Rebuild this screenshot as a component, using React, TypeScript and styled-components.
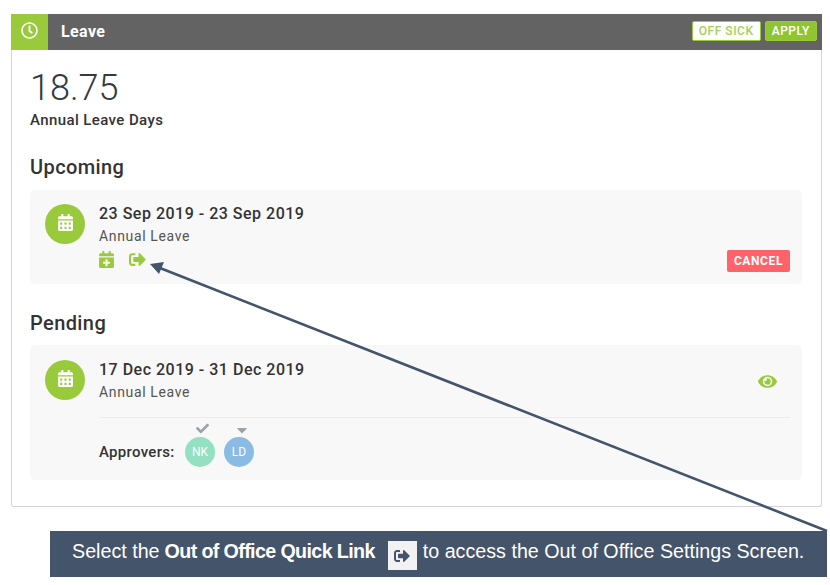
import React from 'react';
import styled, { createGlobalStyle } from 'styled-components';
import { FaCalendarAlt, FaCalendarPlus, FaCaretDown, FaCheck, FaEye, FaRegClock, FaSignOutAlt } from 'react-icons/fa';

const GlobalStyle = createGlobalStyle`
    html, body {
        margin: 0;
        padding: 0;
        background: #fff;
    }
    body {
        font-family: Roboto, "Liberation Sans", sans-serif;
        color: #333;
    }
`;

const App: React.FC = () => {
    return (
        <SPage>
            <GlobalStyle />
            <SCard>
                <SHeader>
                    <SHeaderIcon>
                        <FaRegClock />
                    </SHeaderIcon>
                    <STitle>Leave</STitle>
                    <SHeaderActions>
                        <SOutlineButton>OFF SICK</SOutlineButton>
                        <SSolidButton>APPLY</SSolidButton>
                    </SHeaderActions>
                </SHeader>
                <SBody>
                    <SBalance>18.75</SBalance>
                    <SBalanceLabel>Annual Leave Days</SBalanceLabel>
                    <SSectionTitle>Upcoming</SSectionTitle>
                    <SPanel>
                        <SRow>
                            <SAvatar>
                                <FaCalendarAlt />
                            </SAvatar>
                            <SDetails>
                                <SDates>23 Sep 2019 - 23 Sep 2019</SDates>
                                <SLeaveType>Annual Leave</SLeaveType>
                                <SQuickLinks>
                                    <FaCalendarPlus />
                                    <FaSignOutAlt />
                                </SQuickLinks>
                            </SDetails>
                            <SCancelButton>CANCEL</SCancelButton>
                        </SRow>
                    </SPanel>
                    <SPendingTitle>Pending</SPendingTitle>
                    <SPendingPanel>
                        <SRow>
                            <SAvatar>
                                <FaCalendarAlt />
                            </SAvatar>
                            <SDetails>
                                <SDates>17 Dec 2019 - 31 Dec 2019</SDates>
                                <SLeaveType>Annual Leave</SLeaveType>
                            </SDetails>
                            <SEye>
                                <FaEye />
                            </SEye>
                        </SRow>
                        <SApprovers>
                            <SApproversLabel>Approvers:</SApproversLabel>
                            <SApprover>
                                <SApproverStatus $size={13}>
                                    <FaCheck />
                                </SApproverStatus>
                                <SInitials $color='#8ee0c0'>NK</SInitials>
                            </SApprover>
                            <SApprover>
                                <SApproverStatus $size={16}>
                                    <FaCaretDown />
                                </SApproverStatus>
                                <SInitials $color='#85b8e2'>LD</SInitials>
                            </SApprover>
                        </SApprovers>
                    </SPendingPanel>
                </SBody>
            </SCard>
            <SBanner>
                <span>Select the</span>
                <SBold>Out of Office Quick Link</SBold>
                <SBannerIcon>
                    <FaSignOutAlt />
                </SBannerIcon>
                <span>to access the Out of Office Settings Screen.</span>
            </SBanner>
            <SPointer viewBox='0 0 830 585'>
                <line x1='827' y1='531' x2='160' y2='268' stroke='#44546a' strokeWidth='2.6' />
                <polygon points='150,264 164,262 159,274' fill='#44546a' />
            </SPointer>
        </SPage>
    );
};

export default App;

const SPage = styled.div`
    position: relative;
    width: 830px;
    height: 585px;
    overflow: hidden;
    padding: 14px 0 0 11px;
    box-sizing: border-box;
`;

const SCard = styled.div`
    width: 811px;
    height: 493px;
    box-sizing: border-box;
    background: #fff;
    border: 1px solid #d4d4d4;
    border-top: 0;
    border-radius: 0 0 3px 3px;
`;

const SHeader = styled.div`
    display: flex;
    align-items: center;
    height: 36px;
    margin: 0 -1px;
    background: #636363;
`;

const SHeaderIcon = styled.div`
    display: flex;
    align-items: center;
    justify-content: center;
    width: 37px;
    height: 36px;
    padding-bottom: 3px;
    box-sizing: border-box;
    background: #99ca3c;
    color: #fff;
    font-size: 17px;
`;

const STitle = styled.div`
    margin-left: 13px;
    padding-bottom: 1px;
    color: #fff;
    font-size: 16px;
    font-weight: 700;
    letter-spacing: 0.4px;
`;

const SHeaderActions = styled.div`
    display: flex;
    gap: 4px;
    margin-left: auto;
    margin-right: 5px;
    margin-bottom: 2px;
`;

const SOutlineButton = styled.div`
    display: flex;
    align-items: center;
    height: 20px;
    padding: 0 6px;
    box-sizing: border-box;
    background: #fff;
    border: 1px solid #99ca3c;
    border-radius: 2px;
    color: #a5cf5c;
    font-size: 12px;
    font-weight: 500;
    letter-spacing: 0.55px;
`;

const SSolidButton = styled(SOutlineButton)`
    padding: 0 6px;
    background: #8fc531;
    color: #fff;
`;

const SBody = styled.div`
    display: flex;
    flex-direction: column;
    padding: 16px 19px 0 18px;
`;

const SBalance = styled.div`
    height: 44px;
    color: #333a42;
    font-size: 36px;
    font-weight: 300;
    line-height: 44px;
`;

const SBalanceLabel = styled.div`
    font-size: 15px;
    font-weight: 500;
    line-height: 20px;
    letter-spacing: 0.4px;
`;

const SSectionTitle = styled.div`
    margin-top: 25px;
    font-size: 20px;
    font-weight: 500;
    line-height: 24px;
    letter-spacing: 0.4px;
`;

const SPendingTitle = styled(SSectionTitle)`
    margin-top: 27px;
`;

const SPanel = styled.div`
    position: relative;
    height: 94px;
    margin-top: 11px;
    padding: 14px 12px 0 15px;
    box-sizing: border-box;
    background: #f8f8f8;
    border-radius: 5px;
`;

const SPendingPanel = styled(SPanel)`
    height: 135px;
    margin-top: 10px;
    padding-top: 15px;
`;

const SRow = styled.div`
    display: flex;
    align-items: flex-start;
    gap: 14px;
`;

const SAvatar = styled.div`
    display: flex;
    align-items: center;
    justify-content: center;
    width: 40px;
    height: 40px;
    padding-bottom: 3px;
    box-sizing: border-box;
    flex-shrink: 0;
    border-radius: 50%;
    background: #99ca3c;
    color: #fff;
    font-size: 17px;
`;

const SDetails = styled.div`
    display: flex;
    flex-direction: column;
    flex: 1;
    margin-top: 1px;
`;

const SDates = styled.div`
    height: 20px;
    font-size: 16px;
    font-weight: 500;
    line-height: 18px;
    letter-spacing: 0.5px;
`;

const SLeaveType = styled.div`
    margin-top: 1px;
    color: #555;
    font-size: 14px;
    line-height: 20px;
    letter-spacing: 0.65px;
`;

const SQuickLinks = styled.div`
    display: flex;
    align-items: center;
    gap: 14px;
    margin-top: 5px;
    margin-left: -1px;
    color: #99ca3c;
    font-size: 17px;
`;

const SCancelButton = styled.div`
    display: flex;
    align-items: center;
    height: 22px;
    margin-top: 46px;
    padding: 0 7px;
    background: #ff6369;
    border-radius: 2px;
    color: #fff;
    font-size: 12px;
    font-weight: 700;
    letter-spacing: 0.6px;
`;

const SEye = styled.div`
    margin: 12px 13px 0 0;
    color: #99ca3c;
    font-size: 19px;
    line-height: 19px;
`;

const SApprovers = styled.div`
    display: flex;
    align-items: flex-end;
    margin: 15px 0 0 54px;
    padding-top: 4px;
    border-top: 1px solid #ececec;
`;

const SApproversLabel = styled.div`
    width: 86px;
    padding-bottom: 5px;
    font-size: 15px;
    font-weight: 500;
    line-height: 20px;
    letter-spacing: 0.3px;
`;

const SApprover = styled.div`
    display: flex;
    flex-direction: column;
    align-items: center;
    width: 39px;
`;

const SApproverStatus = styled.div<{ $size: number }>`
    height: 15px;
    margin-right: 4px;
    color: #9aa3ad;
    font-size: ${props => props.$size}px;
    line-height: 12px;
`;

const SInitials = styled.div<{ $color: string }>`
    display: flex;
    align-items: center;
    justify-content: center;
    width: 30px;
    height: 30px;
    margin-right: 9px;
    border-radius: 50%;
    background: ${props => props.$color};
    color: #fff;
    font-size: 12px;
    opacity: 0.95;
`;

const SBanner = styled.div`
    display: flex;
    align-items: center;
    width: 777px;
    height: 46px;
    margin: 24px 0 0 39px;
    padding: 0 0 6px 22px;
    box-sizing: border-box;
    background: #44546a;
    color: #fff;
    font-family: "Liberation Sans", Arial, sans-serif;
    font-size: 19.7px;
    white-space: nowrap;
`;

const SBold = styled.b`
    margin-left: 5px;
    letter-spacing: -0.63px;
`;

const SBannerIcon = styled.div`
    display: flex;
    align-items: center;
    justify-content: center;
    width: 29px;
    height: 29px;
    margin: 9px 6px 0 13px;
    background: #f2f2f2;
    color: #44546a;
    font-size: 16px;
`;

const SPointer = styled.svg`
    position: absolute;
    left: 0;
    top: 0;
    width: 830px;
    height: 585px;
    pointer-events: none;
`;
